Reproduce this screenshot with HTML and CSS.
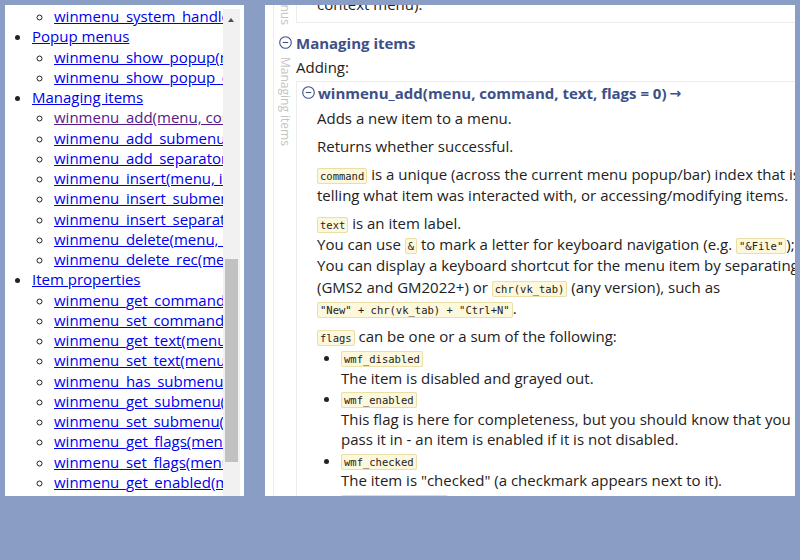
FILE: index.html
```
<!DOCTYPE html>
<html>
<head>
<meta charset="utf-8">
<link rel="stylesheet" href="styles.css">
</head>
<body>
<div class="page">
  <nav class="nav">
    <div class="nav-scroll">
      <ul class="toc">
        <li class="cont">
          <ul>
            <li><a href="#">winmenu_system_handler(menu, flags)</a></li>
          </ul>
        </li>
        <li><a href="#">Popup menus</a>
          <ul>
            <li><a href="#">winmenu_show_popup(menu, x, y)</a></li>
            <li><a href="#">winmenu_show_popup_ext(menu, x, y, flags)</a></li>
          </ul>
        </li>
        <li><a href="#">Managing items</a>
          <ul>
            <li><a href="#" class="visited">winmenu_add(menu, command, text, flags = 0)</a></li>
            <li><a href="#">winmenu_add_submenu(menu, submenu, text)</a></li>
            <li><a href="#">winmenu_add_separator(menu)</a></li>
            <li><a href="#">winmenu_insert(menu, index, command, text)</a></li>
            <li><a href="#">winmenu_insert_submenu(menu, index, submenu)</a></li>
            <li><a href="#">winmenu_insert_separator(menu, index)</a></li>
            <li><a href="#">winmenu_delete(menu, command)</a></li>
            <li><a href="#">winmenu_delete_rec(menu, command)</a></li>
          </ul>
        </li>
        <li><a href="#">Item properties</a>
          <ul>
            <li><a href="#">winmenu_get_command(menu, index)</a></li>
            <li><a href="#">winmenu_set_command(menu, index, command)</a></li>
            <li><a href="#">winmenu_get_text(menu, command)</a></li>
            <li><a href="#">winmenu_set_text(menu, command, text)</a></li>
            <li><a href="#">winmenu_has_submenu(menu, command)</a></li>
            <li><a href="#">winmenu_get_submenu(menu, command)</a></li>
            <li><a href="#">winmenu_set_submenu(menu, command, submenu)</a></li>
            <li><a href="#">winmenu_get_flags(menu, command)</a></li>
            <li><a href="#">winmenu_set_flags(menu, command, flags)</a></li>
            <li><a href="#">winmenu_get_enabled(menu, command)</a></li>
            <li><a href="#">winmenu_set_enabled(menu, command, enabled)</a></li>
          </ul>
        </li>
      </ul>
    </div>
    <div class="scrollbar">
      <div class="sb-arrow"></div>
      <div class="sb-thumb"></div>
    </div>
  </nav>

  <main class="main">
    <div class="doc">
      <section class="sec">
        <div class="sec-wrap">
          <div class="sec-label">Popup menus</div>
          <div class="sec-body">
            <div class="item item-last">
              <div class="item-body">
                <p>Shows the given menu as a popup at the specified position.<br>This can be used for custom right-click menus (e.g. as a<br>context menu).</p>
              </div>
            </div>
          </div>
        </div>
      </section>

      <section class="sec">
        <h2 class="sec-head"><svg class="toggle" width="13" height="13" viewBox="0 0 13 13"><circle cx="6.5" cy="6.5" r="5.8" fill="none" stroke="#3d5088" stroke-width="1.1"/><path d="M3.8 6.5h5.4" stroke="#3d5088" stroke-width="1.1"/></svg>Managing items</h2>
        <div class="sec-wrap">
          <div class="sec-label">Managing items</div>
          <div class="sec-body">
            <p class="lead">Adding:</p>
            <div class="item">
              <h3 class="item-head"><svg class="toggle" width="13" height="13" viewBox="0 0 13 13"><circle cx="6.5" cy="6.5" r="5.8" fill="none" stroke="#3d5088" stroke-width="1.1"/><path d="M3.8 6.5h5.4" stroke="#3d5088" stroke-width="1.1"/></svg>winmenu_add(menu, command, text, flags = 0)<span class="arrow">→</span></h3>
              <div class="item-body">
                <p>Adds a new item to a menu.</p>
                <p>Returns whether successful.</p>
                <p><code>command</code> is a unique (across the current menu popup/bar) index that is used for<br>telling what item was interacted with, or accessing/modifying items.</p>
                <p class="tall"><code>text</code> is an item label.<br>You can use <code>&amp;</code> to mark a letter for keyboard navigation (e.g. <code>"&amp;File"</code>);<br>You can display a keyboard shortcut for the menu item by separating it with a tab<br>(GMS2 and GM2022+) or <code>chr(vk_tab)</code> (any version), such as<br><code>"New" + chr(vk_tab) + "Ctrl+N"</code>.</p>
                <p class="before-list"><code>flags</code> can be one or a sum of the following:</p>
                <ul class="flags">
                  <li><code>wmf_disabled</code><br>The item is disabled and grayed out.</li>
                  <li><code>wmf_enabled</code><br>This flag is here for completeness, but you should know that you can't<br>pass it in - an item is enabled if it is not disabled.</li>
                  <li><code>wmf_checked</code><br>The item is "checked" (a checkmark appears next to it).</li>
                  <li><code>wmf_radiochecked</code><br>The item is checked with a radio bullet.</li>
                </ul>
              </div>
            </div>
          </div>
        </div>
      </section>
    </div>
  </main>
</div>
</body>
</html>
```

FILE: styles.css
```
* { box-sizing: border-box; }

html, body {
  margin: 0;
  padding: 0;
}

body {
  background: #8a9dc4;
  font-family: "Open Sans", "Liberation Sans", sans-serif;
  font-size: 15px;
  color: #222;
}

.page {
  display: flex;
  gap: 21px;
  padding: 5px;
  height: 560px;
}

/* ---------- left navigation ---------- */
.nav {
  position: relative;
  width: 239px;
  height: 491px;
  background: #fff;
  overflow: hidden;
  flex: none;
}

.nav-scroll {
  width: 218px;
  height: 100%;
  overflow: hidden;
  padding-top: 1px;
  white-space: nowrap;
}

.toc, .toc ul {
  margin: 0;
  line-height: 20.25px;
}

.toc {
  padding-left: 27px;
  list-style: disc;
}

.toc ul {
  padding-left: 22px;
  list-style: circle;
}

.toc li.cont {
  list-style: none;
}

.toc a {
  color: #0000ee;
  text-decoration: underline;
}

.toc a.visited {
  color: #551a8b;
}

.scrollbar {
  position: absolute;
  top: 4px;
  right: 4px;
  bottom: 0;
  width: 17px;
  background: #f1f1f1;
}

.sb-arrow {
  position: absolute;
  top: 9px;
  left: 5px;
  width: 0;
  height: 0;
  border-left: 3.5px solid transparent;
  border-right: 3.5px solid transparent;
  border-bottom: 4px solid #505050;
}

.sb-thumb {
  position: absolute;
  top: 250px;
  left: 2px;
  width: 13px;
  height: 203px;
  background: #c1c1c1;
}

/* ---------- main document ---------- */
.main {
  width: 530px;
  height: 491px;
  background: #fff;
  overflow: hidden;
  flex: none;
}

.doc {
  margin-left: 8px;
  margin-top: -60px;
  border-left: 1px solid #ececec;
  width: 900px;
  white-space: nowrap;
}

.sec-wrap {
  display: flex;
  align-items: flex-start;
}

.sec-label {
  width: 22px;
  flex: none;
  writing-mode: vertical-rl;
  font-size: 12px;
  line-height: 21px;
  color: #c4c4c4;
  padding-top: 2px;
}

.sec-body {
  flex: 1;
}

.sec-head {
  margin: 6px 0 0;
  padding-left: 5px;
  font-size: 15px;
  font-weight: bold;
  line-height: 24px;
  color: #3d5088;
  display: flex;
  align-items: center;
}

.toggle {
  flex: none;
  margin-right: 4px;
}

.lead {
  margin: 2px 0 3px;
  line-height: 21px;
}

.item {
  border-top: 1px solid #ececec;
  border-left: 1px solid #ececec;
}

.item-last {
  border-top: none;
  border-bottom: 1px solid #ececec;
}

.item-head {
  margin: 0;
  padding-left: 5px;
  font-size: 15px;
  font-weight: bold;
  line-height: 22px;
  color: #3d5088;
  display: flex;
  align-items: center;
}

.item-head .toggle {
  margin-right: 3px;
}

.arrow {
  margin-left: 3px;
  font-family: "DejaVu Sans", sans-serif;
  font-size: 14px;
  font-weight: bold;
}

.item-body {
  padding: 4px 0 0 20px;
}

.item-body p {
  margin: 0 0 7px;
  line-height: 21px;
}

.item-body p.tall {
  line-height: 21.2px;
  margin-top: 1px;
}

.item-body p.before-list {
  margin-bottom: 0;
}

.item-last .item-body {
  padding: 7px 0 0 20px;
}

code {
  font-family: "DejaVu Sans Mono", "Liberation Mono", monospace;
  font-size: 10.5px;
  line-height: 1;
  background: #fdf8dc;
  border: 1px solid #eadfa8;
  border-radius: 2px;
  padding: 1px 2px;
  color: #222;
}

.flags {
  margin: 0;
  padding-left: 24px;
  list-style: disc;
  line-height: 20.6px;
}
```
